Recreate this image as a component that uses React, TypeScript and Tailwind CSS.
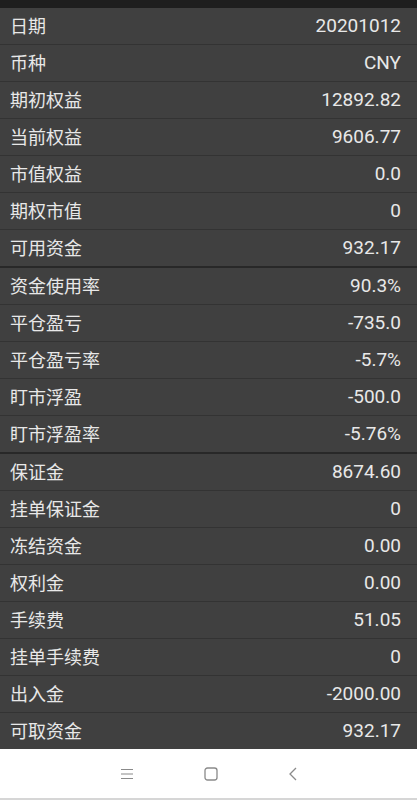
import React from 'react';

const groups: [string, string][][] = [
  [
    ['日期', '20201012'],
    ['币种', 'CNY'],
    ['期初权益', '12892.82'],
    ['当前权益', '9606.77'],
    ['市值权益', '0.0'],
    ['期权市值', '0'],
    ['可用资金', '932.17'],
  ],
  [
    ['资金使用率', '90.3%'],
    ['平仓盈亏', '-735.0'],
    ['平仓盈亏率', '-5.7%'],
    ['盯市浮盈', '-500.0'],
    ['盯市浮盈率', '-5.76%'],
  ],
  [
    ['保证金', '8674.60'],
    ['挂单保证金', '0'],
    ['冻结资金', '0.00'],
    ['权利金', '0.00'],
    ['手续费', '51.05'],
    ['挂单手续费', '0'],
    ['出入金', '-2000.00'],
    ['可取资金', '932.17'],
  ],
];

export default function App() {
  return (
    <div
      className="flex h-[800px] w-[417px] flex-col bg-[#282828] text-[#e8e8e8]"
      style={{ fontFamily: 'Roboto, "Noto Sans CJK SC", sans-serif' }}
    >
      <div className="h-[8px] bg-[#1e1e1e]" />
      <div className="flex flex-col gap-[2px]">
        {groups.map((g, gi) => (
          <div key={gi} className="flex flex-col gap-px bg-[#333333]">
            {g.map(([k, v]) => (
              <div key={k} className="flex h-[36px] items-center justify-between bg-[#404040] pl-[10px] pr-[16px]">
                <span className="text-[18px]">{k}</span>
                <span className="text-[19px]">{v}</span>
              </div>
            ))}
          </div>
        ))}
      </div>
      <div className="mt-auto flex h-[51px] items-center justify-center gap-[70px] border-b-2 border-[#d6d6d6] bg-white text-[#8a8a8a]">
        <svg width="14" height="12" viewBox="0 0 14 12" fill="none" stroke="currentColor" strokeWidth="1.2">
          <path d="M1 1.5h12M1 6h12M1 10.5h12" />
        </svg>
        <svg width="14" height="14" viewBox="0 0 14 14" fill="none" stroke="currentColor" strokeWidth="1.3">
          <rect x="1" y="1" width="12" height="12" rx="2.5" />
        </svg>
        <svg width="10" height="14" viewBox="0 0 10 14" fill="none" stroke="currentColor" strokeWidth="1.3">
          <path d="M8 1L2 7l6 6" />
        </svg>
      </div>
    </div>
  );
}
